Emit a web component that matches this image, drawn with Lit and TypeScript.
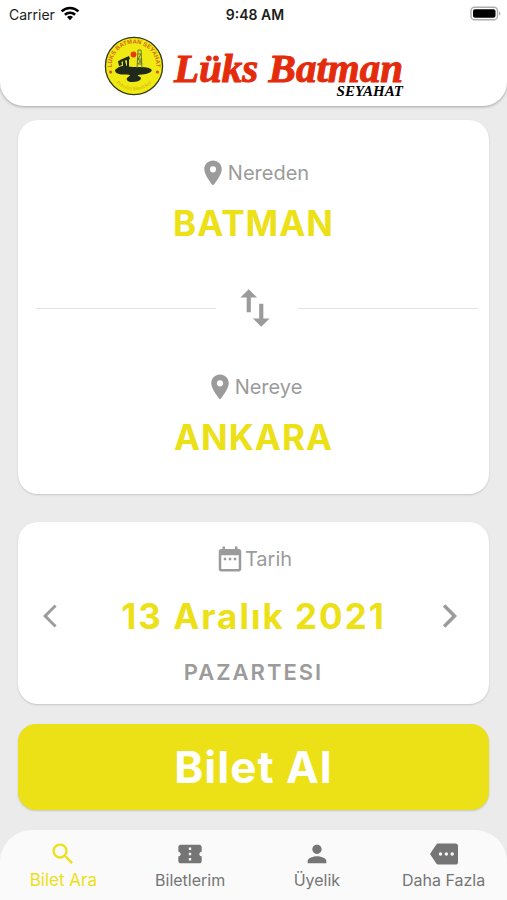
import { LitElement, html, css, svg } from "lit";
import { customElement, property, state } from "lit/decorators.js";
import { classMap } from "lit/directives/class-map.js";

const ICONS: Record<string, string> = {
  place:
    "M12 2C8.13 2 5 5.13 5 9c0 5.25 7 13 7 13s7-7.75 7-13c0-3.87-3.13-7-7-7zm0 9.5a2.5 2.5 0 0 1 0-5 2.5 2.5 0 0 1 0 5z",
  swap: "M9 3L5 6.99h3V14h2V6.99h3L9 3zm7 14.01V10h-2v7.01h-3L15 21l4-3.99h-3z",
  calendar:
    "M9 11H7v2h2v-2zm4 0h-2v2h2v-2zm4 0h-2v2h2v-2zm2-7h-1V2h-2v2H8V2H6v2H5c-1.11 0-1.99.9-1.99 2L3 20c0 1.1.89 2 2 2h14c1.1 0 2-.9 2-2V6c0-1.1-.9-2-2-2zm0 16H5V9h14v11z",
  back: "M11.67 3.87L9.9 2.1 0 12l9.9 9.9 1.77-1.77L3.54 12z",
  forward: "M5.88 4.12L13.76 12l-7.88 7.88L8 22l10-10L8 2z",
  search:
    "M15.5 14h-.79l-.28-.27C15.41 12.59 16 11.11 16 9.5 16 5.91 13.09 3 9.5 3S3 5.91 3 9.5 5.91 16 9.5 16c1.61 0 3.09-.59 4.23-1.57l.27.28v.79l5 4.99L20.49 19l-4.99-5zm-6 0C7.01 14 5 11.99 5 9.5S7.01 5 9.5 5 14 7.01 14 9.5 11.99 14 9.5 14z",
  ticket:
    "M22 10V6c0-1.11-.9-2-2-2H4c-1.1 0-1.99.89-1.99 2v4c1.1 0 1.99.9 1.99 2s-.89 2-2 2v4c0 1.1.9 2 2 2h16c1.1 0 2-.9 2-2v-4c-1.1 0-2-.9-2-2s.9-2 2-2zm-9 7.5h-2v-2h2v2zm0-4.5h-2v-2h2v2zm0-4.5h-2v-2h2v2z",
  person:
    "M12 12c2.21 0 4-1.79 4-4s-1.79-4-4-4-4 1.79-4 4 1.79 4 4 4zm0 2c-2.67 0-8 1.34-8 4v2h16v-2c0-2.66-5.33-4-8-4z",
  more: "M22 3H7c-.69 0-1.23.35-1.59.88L0 12l5.41 8.11c.36.53.9.89 1.59.89h15c1.1 0 2-.9 2-2V5c0-1.1-.9-2-2-2zM9 13.5a1.5 1.5 0 0 1 0-3 1.5 1.5 0 0 1 0 3zm5 0a1.5 1.5 0 0 1 0-3 1.5 1.5 0 0 1 0 3zm5 0a1.5 1.5 0 0 1 0-3 1.5 1.5 0 0 1 0 3z",
};

@customElement("md-icon")
class MdIcon extends LitElement {
  @property() name = "";

  static styles = css`
    :host {
      display: block;
      flex: none;
      width: 28px;
      height: 28px;
    }
    .glyph {
      display: block;
      width: 100%;
      height: 100%;
      fill: currentColor;
    }
  `;

  render() {
    return html`<svg class="glyph" viewBox="0 0 24 24" aria-hidden="true">
      ${svg`<path d=${ICONS[this.name]} />`}
    </svg>`;
  }
}

@customElement("status-bar")
class StatusBar extends LitElement {
  static styles = css`
    :host {
      display: grid;
      grid-template-columns: 1fr auto 1fr;
      align-items: center;
      height: 28px;
      padding: 0 6px 0 9px;
      font-size: 14px;
      color: #1c1c1c;
    }
    .carrier {
      display: flex;
      align-items: center;
      gap: 5px;
    }
    .time {
      font-weight: 600;
    }
    .battery {
      justify-self: end;
    }
    svg {
      display: block;
    }
  `;

  render() {
    return html`
      <div class="carrier">
        <span>Carrier</span>
        <svg width="20" height="16" viewBox="0 0 20 16" aria-hidden="true">
          <g fill="none" stroke="#000" stroke-width="2.6">
            <path d="M1.6 5.4a12 12 0 0 1 16.8 0" />
            <path d="M4.9 8.8a7.4 7.4 0 0 1 10.2 0" />
          </g>
          <path d="M10 14.2l-3-3.1a4.3 4.3 0 0 1 6 0z" />
        </svg>
      </div>
      <span class="time">9:48 AM</span>
      <svg class="battery" width="31" height="16" viewBox="0 0 31 16" aria-hidden="true">
        <rect x="1" y="1.2" width="26.5" height="12.6" rx="3.6" fill="#fff" stroke="#adadad" stroke-width="1.4" />
        <rect x="3" y="3.2" width="22.5" height="8.6" rx="2" />
        <path d="M29 5.2a2.6 2.6 0 0 1 0 4.6z" fill="#adadad" />
      </svg>
    `;
  }
}

@customElement("brand-logo")
class BrandLogo extends LitElement {
  static styles = css`
    :host {
      display: flex;
      justify-content: center;
      align-items: flex-end;
      gap: 10px;
      padding: 8px 0 10px;
    }
    .emblem {
      display: block;
      width: 60px;
      height: 60px;
    }
    .ring {
      font: 700 6px "Liberation Sans", sans-serif;
      fill: #d8641c;
    }
    .motto {
      font: italic 5px "Liberation Serif", serif;
      fill: #d6a51c;
    }
    .words {
      display: flex;
      flex-direction: column;
      font-family: "Liberation Serif", serif;
      font-style: italic;
      font-weight: 700;
    }
    .name {
      font-size: 41px;
      line-height: 36px;
      color: #e42b0c;
      -webkit-text-stroke: 1px #e42b0c;
    }
    .sub {
      align-self: flex-end;
      font-size: 15px;
      line-height: 10px;
      color: #000;
    }
  `;

  render() {
    return html`
      <svg class="emblem" viewBox="0 0 60 60" aria-hidden="true">
        <defs>
          <path id="top" d="M9.6 38.5A22.2 22.2 0 1 1 50.4 38.5" />
          <path id="bottom" d="M8 41A25 25 0 0 0 52 41" />
        </defs>
        <circle cx="30" cy="30" r="28.6" fill="#eeea12" stroke="#34391c" stroke-width="1.3" />
        <text class="ring"><textPath href="#top" startOffset="50%" text-anchor="middle">LÜKS BATMAN SEYAHAT</textPath></text>
        <text class="motto"><textPath href="#bottom" startOffset="50%" text-anchor="middle">Petrolün Memleketi</textPath></text>
        <circle cx="6.6" cy="36" r="1.6" fill="#e0521a" />
        <circle cx="53.4" cy="36" r="1.6" fill="#e0521a" />
        <path
          d="M11 34c2-2 5-4 8-4 3-1 6 1 10 1h6c4 0 8 0 12 2 2 2-1 4-5 5l-8 1c-1 1 2 1 3 3 0 3-5 4-9 4s-6-2-5-4c1-1 3-2 3-3-4-1-8 0-11-1s-4-2-4-4z"
          fill="#202a1c"
        />
        <path d="M16 24l9-4 1 3-9 3zM19 25h2l2 7h-4zM23 22h2v10h-2zM14 25l3-1 1 5-3 1z" fill="#202a1c" />
        <path d="M33 32l1-18h3l1 18M34 28h4M34 23h4M34 18h3M34 28l4-5M34 23l3-5M38 28l-4-5" fill="none" stroke="#65733a" stroke-width="1" />
        <circle cx="29.5" cy="18.5" r="2.9" fill="#ea3a12" />
      </svg>
      <div class="words">
        <span class="name">Lüks Batman</span>
        <span class="sub">SEYAHAT</span>
      </div>
    `;
  }
}

interface Tab {
  icon: string;
  label: string;
}

@customElement("app-root")
class AppRoot extends LitElement {
  @state() private from = "BATMAN";
  @state() private to = "ANKARA";
  @state() private day = new Date(2021, 11, 13);
  @state() private active = 0;

  private tabs: Tab[] = [
    { icon: "search", label: "Bilet Ara" },
    { icon: "ticket", label: "Biletlerim" },
    { icon: "person", label: "Üyelik" },
    { icon: "more", label: "Daha Fazla" },
  ];

  private months = ["Ocak", "Şubat", "Mart", "Nisan", "Mayıs", "Haziran", "Temmuz", "Ağustos", "Eylül", "Ekim", "Kasım", "Aralık"];
  private weekdays = ["PAZAR", "PAZARTESI", "SALI", "ÇARŞAMBA", "PERŞEMBE", "CUMA", "CUMARTESI"];

  static styles = css`
    :host {
      display: flex;
      flex-direction: column;
      min-height: 100vh;
      background: #ebebeb;
      font-family: Inter, "Liberation Sans", sans-serif;
      color: #9b9b9b;
    }
    button {
      margin: 0;
      padding: 0;
      border: 0;
      background: none;
      font: inherit;
      color: inherit;
      cursor: pointer;
    }
    .header {
      border-radius: 0 0 24px 24px;
      background: #fff;
      box-shadow: 0 1px 3px rgba(0, 0, 0, 0.3);
    }
    .main {
      flex: 1;
      display: flex;
      flex-direction: column;
      padding: 14px 18px 20px;
    }
    .card {
      border-radius: 20px;
      background: #fff;
      box-shadow: 0 1px 2px rgba(0, 0, 0, 0.16);
    }
    .route {
      display: flex;
      flex-direction: column;
      padding: 37px 0 35px;
      margin-bottom: 28px;
    }
    .place {
      display: flex;
      flex-direction: column;
      align-items: center;
    }
    .caption {
      display: flex;
      align-items: center;
      justify-content: center;
      height: 32px;
      font-size: 20px;
    }
    .caption md-icon {
      width: 30px;
      height: 30px;
    }
    .value {
      font-size: 35px;
      line-height: 44px;
      font-weight: 700;
      letter-spacing: 2px;
      color: #ece016;
    }
    .place .value {
      margin-top: 12px;
      letter-spacing: 1px;
    }
    .divider {
      display: flex;
      align-items: center;
      padding: 38px 11px 38px 18px;
    }
    .rule {
      flex: 1;
      height: 0;
      margin: 0;
      border: 0;
      border-top: 1px solid #e2e2e2;
    }
    .swap {
      padding: 0 18px 0 14px;
    }
    .swap md-icon {
      width: 50px;
      height: 50px;
    }
    .date {
      display: flex;
      flex-direction: column;
      padding: 21px 25px 18px;
      margin-bottom: 20px;
    }
    .picker {
      display: flex;
      align-items: center;
      justify-content: space-between;
      margin-top: 19px;
    }
    .weekday {
      margin-top: 20px;
      font-size: 22px;
      line-height: 28px;
      font-weight: 600;
      letter-spacing: 2px;
      text-align: center;
    }
    .buy {
      height: 86px;
      border-radius: 18px;
      background: #ece016;
      box-shadow: 0 1px 2px rgba(0, 0, 0, 0.16);
      font-size: 44px;
      font-weight: 700;
      letter-spacing: 1px;
      color: #fff;
    }
    .nav {
      display: grid;
      grid-template-columns: repeat(4, 1fr);
      height: 70px;
      border-radius: 32px 32px 0 0;
      background: #fafafa;
      color: #757575;
    }
    .tab {
      display: flex;
      flex-direction: column;
      align-items: center;
      padding-top: 10px;
      font-size: 16px;
      line-height: 24px;
    }
    .tab.active {
      font-size: 17px;
      color: #ece016;
    }
  `;

  private swap() {
    [this.from, this.to] = [this.to, this.from];
  }

  private shift(days: number) {
    const next = new Date(this.day);
    next.setDate(next.getDate() + days);
    this.day = next;
  }

  private place(label: string, city: string) {
    return html`<button class="place">
      <span class="caption"><md-icon name="place"></md-icon>${label}</span>
      <span class="value">${city}</span>
    </button>`;
  }

  render() {
    const d = this.day;
    return html`
      <header class="header">
        <status-bar></status-bar>
        <brand-logo></brand-logo>
      </header>
      <main class="main">
        <section class="card route">
          ${this.place("Nereden", this.from)}
          <div class="divider">
            <hr class="rule" />
            <button class="swap" aria-label="Değiştir" @click=${this.swap}><md-icon name="swap"></md-icon></button>
            <hr class="rule" />
          </div>
          ${this.place("Nereye", this.to)}
        </section>
        <section class="card date">
          <div class="caption"><md-icon name="calendar"></md-icon>Tarih</div>
          <div class="picker">
            <button aria-label="Önceki gün" @click=${() => this.shift(-1)}><md-icon name="back"></md-icon></button>
            <span class="value">${d.getDate()} ${this.months[d.getMonth()]} ${d.getFullYear()}</span>
            <button aria-label="Sonraki gün" @click=${() => this.shift(1)}><md-icon name="forward"></md-icon></button>
          </div>
          <div class="weekday">${this.weekdays[d.getDay()]}</div>
        </section>
        <button class="buy">Bilet Al</button>
      </main>
      <nav class="nav">
        ${this.tabs.map(
          (tab, i) => html`<button
            class=${classMap({ tab: true, active: i === this.active })}
            @click=${() => (this.active = i)}
          >
            <md-icon name=${tab.icon}></md-icon><span>${tab.label}</span>
          </button>`
        )}
      </nav>
    `;
  }
}
